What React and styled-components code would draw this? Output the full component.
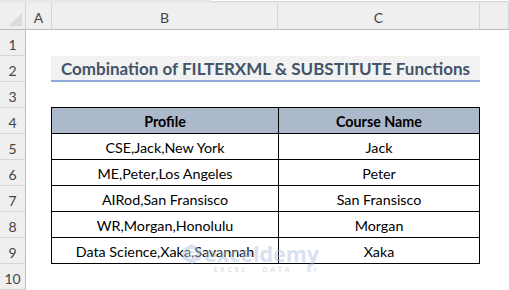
import React from "react";
import styled, { createGlobalStyle } from "styled-components";

const GlobalStyle = createGlobalStyle`
  body {
    margin: 0;
    background: #ffffff;
    font-family: "Lato", "Liberation Sans", sans-serif;
  }
  * { box-sizing: border-box; }
`;

const Window = styled.div`
  position: relative;
  width: 509px;
  height: 290px;
  overflow: hidden;
  background: #fff;
`;

const TopStrip = styled.div`
  height: 3px;
  background: #e9e9e9;
  display: flex;
  justify-content: flex-end;
`;

const FormulaEdge = styled.div`
  width: 300px;
  height: 2px;
  background: #fff;
  border-bottom: 1px solid #d6d6d6;
  border-left: 1px solid #d6d6d6;
  border-bottom-left-radius: 3px;
`;

const ColHeaderRow = styled.div`
  display: flex;
  height: 27px;
  background: #efefef;
  border-bottom: 1px solid #bdbdbd;
`;

const Corner = styled.div`
  position: relative;
  width: 26px;
  border-right: 1px solid #d2d2d2;
  &::after {
    content: "";
    position: absolute;
    right: 3px;
    bottom: 3px;
    border-left: 13px solid transparent;
    border-bottom: 13px solid #dadada;
  }
`;

const ColHead = styled.div`
  width: ${(p) => p.$w}px;
  flex: ${(p) => (p.$w ? "none" : "1")};
  border-right: 1px solid #d6d6d6;
  display: flex;
  align-items: center;
  justify-content: center;
  font-size: 14px;
  color: #444;
  padding-top: 2px;
`;

const Body = styled.div`
  display: flex;
`;

const RowHeaders = styled.div`
  width: 26px;
  background: #efefef;
  border-right: 1px solid #bdbdbd;
  display: flex;
  flex-direction: column;
`;

const RowNum = styled.div`
  height: 26px;
  border-bottom: 1px solid #d6d6d6;
  display: flex;
  align-items: center;
  justify-content: center;
  font-size: 14px;
  color: #444;
  padding-top: 3px;
`;

const Sheet = styled.div`
  flex: 1;
  display: flex;
  flex-direction: column;
`;

const Spacer = styled.div`
  height: ${(p) => p.$h}px;
`;

const Title = styled.div`
  margin-left: 25px;
  width: 429px;
  height: 26px;
  background: #f2f2f2;
  border-bottom: 2px solid #8eaadb;
  display: flex;
  align-items: center;
  justify-content: center;
  font-weight: 700;
  font-size: 17px;
  color: #44546a;
  padding-top: 1px;
`;

const Table = styled.div`
  margin-left: 25px;
  width: 429px;
  border: 1px solid #000;
  border-bottom: none;
`;

const Row = styled.div`
  display: grid;
  grid-template-columns: 226px 1fr;
  height: 26px;
  border-bottom: 1px solid #000;
  background: ${(p) => (p.$head ? "#acb9ca" : "#fff")};
`;

const Cell = styled.div`
  display: flex;
  align-items: center;
  justify-content: center;
  font-size: 14.3px;
  font-weight: ${(p) => (p.$head ? 700 : 400)};
  color: #000;
  padding-top: 1px;
  & + & {
    border-left: 1px solid #000;
  }
`;

const Watermark = styled.div`
  position: absolute;
  left: 182px;
  top: 243px;
  display: flex;
  align-items: flex-start;
  gap: 2px;
  opacity: 0.45;
  pointer-events: none;
`;

const WmText = styled.div`
  display: flex;
  flex-direction: column;
  align-items: flex-end;
`;

const WmBrand = styled.div`
  font-family: "Open Sans", sans-serif;
  font-weight: 700;
  font-size: 21.5px;
  line-height: 21px;
  color: #a9bde0;
`;

const WmTag = styled.div`
  font-family: "Open Sans", sans-serif;
  font-weight: 700;
  font-size: 7px;
  letter-spacing: 2.8px;
  color: #bcc4cf;
  margin-top: 1px;
`;

const rows = [
  ["CSE,Jack,New York", "Jack"],
  ["ME,Peter,Los Angeles", "Peter"],
  ["AIRod,San Fransisco", "San Fransisco"],
  ["WR,Morgan,Honolulu", "Morgan"],
  ["Data Science,Xaka,Savannah", "Xaka"],
];

export default function App() {
  return (
    <Window>
      <GlobalStyle />
      <TopStrip>
        <FormulaEdge />
      </TopStrip>
      <ColHeaderRow>
        <Corner />
        <ColHead $w={26}>A</ColHead>
        <ColHead $w={226}>B</ColHead>
        <ColHead $w={202}>C</ColHead>
        <ColHead />
      </ColHeaderRow>
      <Body>
        <RowHeaders>
          {Array.from({ length: 10 }, (_, i) => (
            <RowNum key={i}>{i + 1}</RowNum>
          ))}
        </RowHeaders>
        <Sheet>
          <Spacer $h={26} />
          <Title>Combination of FILTERXML &amp; SUBSTITUTE Functions</Title>
          <Spacer $h={25} />
          <Table>
            <Row $head>
              <Cell $head>Profile</Cell>
              <Cell $head>Course Name</Cell>
            </Row>
            {rows.map(([a, b]) => (
              <Row key={a}>
                <Cell>{a}</Cell>
                <Cell>{b}</Cell>
              </Row>
            ))}
          </Table>
        </Sheet>
      </Body>
      <Watermark>
        <svg width="20" height="22" viewBox="0 0 20 22">
          <path d="M10 1 L19 6 L19 16 L10 21 L1 16 L1 6 Z" fill="#a9bde0" />
          <path d="M6 11 H14 A4 4 0 1 0 12.5 14" fill="none" stroke="#fff" strokeWidth="2" />
        </svg>
        <WmText>
          <WmBrand>exceldemy</WmBrand>
          <WmTag>EXCEL · DATA · BI</WmTag>
        </WmText>
      </Watermark>
    </Window>
  );
}
